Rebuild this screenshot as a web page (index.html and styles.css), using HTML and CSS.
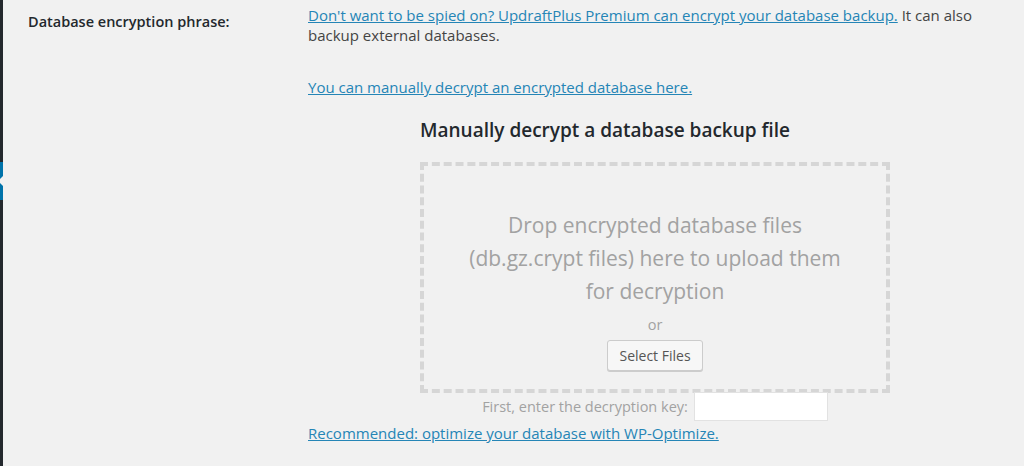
FILE: index.html
```html
<!DOCTYPE html>
<html lang="en">
<head>
<meta charset="utf-8">
<title>UpdraftPlus - Database encryption</title>
<link rel="stylesheet" href="styles.css">
</head>
<body>
<div class="adminbar">
  <div class="menu-gap"></div>
  <div class="menu-current"></div>
</div>
<div class="content">
  <div class="form-row">
    <div class="label">Database encryption phrase:</div>
    <div class="field">
      <p class="intro"><a href="#">Don't want to be spied on? UpdraftPlus Premium can encrypt your database backup.</a> It can also backup external databases.</p>
      <p class="manual"><a href="#">You can manually decrypt an encrypted database here.</a></p>
      <div class="decrypt">
        <h3 class="decrypt-title">Manually decrypt a database backup file</h3>
        <div class="dropzone">
          <p class="drop-text">Drop encrypted database files (db.gz.crypt files) here to upload them for decryption</p>
          <p class="drop-or">or</p>
          <button class="btn" type="button">Select Files</button>
        </div>
        <div class="key-row">
          <label class="key-label" for="key">First, enter the decryption key:</label>
          <input class="key-input" id="key" type="text">
        </div>
      </div>
      <p class="recommend"><a href="#">Recommended: optimize your database with WP-Optimize.</a></p>
    </div>
  </div>
</div>
</body>
</html>
```

FILE: styles.css
```css
html, body {
  margin: 0;
  padding: 0;
  height: 100%;
}
body {
  background: #f1f1f1;
  font-family: "Open Sans", "Noto Sans", sans-serif;
  font-size: 15px;
  color: #444;
  display: flex;
  overflow: hidden;
}
.adminbar {
  width: 3px;
  flex: none;
  background: #23282d;
  display: flex;
  flex-direction: column;
}
.menu-gap {
  height: 162px;
}
.menu-current {
  height: 38px;
  background: #0073aa;
  position: relative;
}
.menu-current::after {
  content: "";
  position: absolute;
  right: 0;
  top: 14px;
  border: 5px solid transparent;
  border-right-color: #f1f1f1;
  border-left-width: 0;
  width: 0;
  height: 0;
}
.content {
  flex: 1;
  padding-left: 25px;
}
.form-row {
  display: grid;
  grid-template-columns: 280px 1fr;
}
.label {
  font-weight: 600;
  color: #23282d;
  font-size: 14.5px;
  line-height: 20px;
  padding-top: 12px;
}
.field {
  padding-top: 5px;
  padding-right: 24px;
  line-height: 20px;
}
.field p {
  margin: 0;
}
a {
  color: #2585b6;
  text-decoration: underline;
}
.manual {
  margin-top: 32px !important;
}
.decrypt {
  margin-left: 112px;
  width: 470px;
}
.decrypt-title {
  margin: 19px 0 0;
  font-size: 19px;
  font-weight: 600;
  color: #23282d;
  line-height: 28px;
  height: 46px;
}
.dropzone {
  box-sizing: border-box;
  height: 231px;
  border: 4px dashed #d6d6d6;
  display: flex;
  flex-direction: column;
  align-items: center;
  padding: 43px 30px 0;
  text-align: center;
}
.drop-text {
  font-size: 21px;
  line-height: 33px;
  color: #a2a2a2;
  width: 400px;
}
.drop-or {
  color: #a2a2a2;
  font-size: 14.5px;
  line-height: 20px;
  margin-top: 7px !important;
}
.btn {
  margin-top: 5px;
  width: 96px;
  height: 31px;
  background: #f7f7f7;
  border: 1px solid #cccccc;
  border-radius: 3px;
  box-shadow: 0 1px 0 #cccccc;
  font-family: inherit;
  font-size: 14px;
  color: #555;
  padding: 0;
}
.key-row {
  display: flex;
  justify-content: center;
  align-items: center;
  gap: 6px;
  height: 29px;
  margin-top: -1px;
}
.key-label {
  color: #a2a2a2;
  font-size: 14.5px;
}
.key-input {
  box-sizing: border-box;
  width: 134px;
  height: 29px;
  border: 1px solid #e2e2e2;
  background: #fff;
  margin: 0;
}
.recommend {
  margin-top: 2px !important;
}
```
